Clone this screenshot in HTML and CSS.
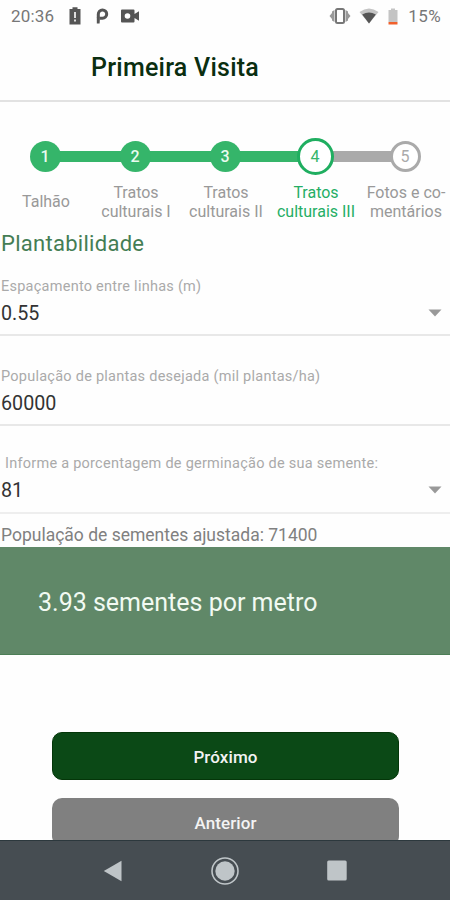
FILE: index.html
```html
<!DOCTYPE html>
<html lang="pt-BR">
<head>
<meta charset="utf-8">
<title>Primeira Visita</title>
<link rel="stylesheet" href="styles.css">
</head>
<body>
<div class="screen">
  <div class="status">
    <span class="clock">20:36</span>
    <svg class="st-alert" width="12" height="18" viewBox="0 0 12 18"><path fill="#555" d="M3.500 2V.3h5V2H11.500v15.500H.5V2z"/><path fill="#ddd" d="M5 5h2v6H5zM5 12.500h2v2H5z"/></svg>
    <svg class="st-p" width="13" height="16" viewBox="0 0 13 16"><path fill="none" stroke="#555" stroke-width="3" d="M2.300 9.500V6.200A4.200 4.200 0 1 1 6.500 10.300H3.500"/><path fill="#555" d="M.8 9h3v3L3.600 15.500H.8z"/></svg>
    <svg class="st-cam" width="20" height="14" viewBox="0 0 20 14"><path fill="#555" d="M2 .5h11.500q1 0 1 1V5L19 2.300v9.400L14.500 9v3.500q0 1-1 1H2q-1 0-1-1v-11q0-1 1-1z"/><circle cx="7.500" cy="7" r="2.800" fill="#fff"/></svg>
    <span class="grow"></span>
    <svg class="st-vib" width="22" height="16" viewBox="0 0 22 16"><path fill="#999" d="M5.500 2v12L3 12.500V11L.5 8 3 5V3.500zM16.500 2v12l2.500-1.500V11l2.500-3L19 5V3.500z"/><rect x="7" y="1" width="8" height="14" rx="1.500" fill="#fff" stroke="#777" stroke-width="2"/></svg>
    <svg class="st-wifi" width="20" height="16" viewBox="0 0 20 16"><path fill="#c4c4c4" d="M.5 4Q10-3 19.500 4L10 15.500z"/><path fill="#555" d="M3.200 6.500Q10 2.300 16.800 6.500L10 15.500z"/></svg>
    <svg class="st-bat" width="10" height="17" viewBox="0 0 10 17"><path fill="#c4c4c4" d="M3 2V.5h4V2h2.500v12H.5V2z"/><path fill="#f0602c" d="M.5 14h9v2.500h-9z"/></svg>
    <span class="percent">15%</span>
  </div>
  <header class="header"><h1>Primeira Visita</h1></header>

  <ol class="stepper">
    <li class="step done"><div class="track"><i class="bar none"></i><b class="dot">1</b><i class="bar"></i></div><div class="label"><span>Talhão</span></div></li>
    <li class="step done"><div class="track"><i class="bar"></i><b class="dot">2</b><i class="bar"></i></div><div class="label"><span>Tratos<br>culturais I</span></div></li>
    <li class="step done"><div class="track"><i class="bar"></i><b class="dot">3</b><i class="bar"></i></div><div class="label"><span>Tratos<br>culturais II</span></div></li>
    <li class="step current"><div class="track"><i class="bar"></i><b class="dot">4</b><i class="bar todo"></i></div><div class="label"><span>Tratos<br>culturais III</span></div></li>
    <li class="step next"><div class="track"><i class="bar todo"></i><b class="dot">5</b><i class="bar none"></i></div><div class="label"><span>Fotos e co-<br>mentários</span></div></li>
  </ol>

  <main class="form">
    <h2>Plantabilidade</h2>
    <div class="field spacing">
      <div class="caption">Espaçamento entre linhas (m)</div>
      <div class="value"><span>0.55</span><svg width="14" height="8" viewBox="0 0 14 8"><path fill="#999" d="M.5.500h13L7 7.500z"/></svg></div>
    </div>
    <div class="field population">
      <div class="caption">População de plantas desejada (mil plantas/ha)</div>
      <div class="value"><span>60000</span></div>
    </div>
    <div class="field germination">
      <div class="caption">Informe a porcentagem de germinação de sua semente:</div>
      <div class="value"><span>81</span><svg width="14" height="8" viewBox="0 0 14 8"><path fill="#999" d="M.5.500h13L7 7.500z"/></svg></div>
    </div>
    <p class="adjusted"><span>População de sementes ajustada: 71400</span></p>
    <div class="result"><span>3.93 sementes por metro</span></div>
    <div class="actions">
      <button class="btn primary">Próximo</button>
      <button class="btn secondary">Anterior</button>
    </div>
  </main>

  <nav class="navbar">
    <svg width="20" height="22" viewBox="0 0 20 22"><path fill="#bfc5c8" d="M18.500.7v20.500L.8 11z"/></svg>
    <svg width="30" height="30" viewBox="0 0 30 30"><circle cx="15" cy="15" r="13" fill="none" stroke="#bfc5c8" stroke-width="1.600"/><circle cx="15" cy="15" r="9.700" fill="#bfc5c8"/></svg>
    <svg width="20" height="21" viewBox="0 0 20 21"><rect x=".2" y=".5" width="19.500" height="20" rx="1.500" fill="#bfc5c8"/></svg>
  </nav>
</div>
</body>
</html>
```
FILE: styles.css
```css
* { box-sizing: border-box; }
body { margin: 0; background: #fff; font-family: Roboto, "Liberation Sans", sans-serif; }
.screen { width: 450px; height: 900px; display: flex; flex-direction: column; overflow: hidden; background: #fefefe; }
svg { display: block; flex: none; }
.grow { flex: 1; }

.status { height: 32px; flex: none; display: flex; align-items: center; padding: 0 9px 0 11px; color: #777; font-size: 17px; }
.clock { letter-spacing: .2px; }
.percent { letter-spacing: .4px; }
.st-alert { margin-left: 15px; }
.st-p { margin-left: 15px; }
.st-cam { margin-left: 11px; }
.st-wifi { margin-left: 8px; }
.st-bat { margin: 0 10px 0 9px; }

.header { height: 70px; flex: none; border-bottom: 2px solid #e2e2e2; padding: 20px 0 0 91px; }
h1 { margin: 0; font-size: 25px; line-height: 32px; font-weight: 500; letter-spacing: .25px; color: #0a2e10; }

.stepper { list-style: none; margin: 0; padding: 36px 0 0; display: flex; flex: none; height: 127px; }
.step { width: 90px; color: #999; }
.track { height: 37px; display: flex; align-items: center; }
.bar { flex: 1; height: 11px; background: #35b56a; }
.bar.todo { background: #aaa; }
.bar.none { background: none; }
.dot { position: relative; width: 31px; height: 31px; margin: 0 -2px; border-radius: 50%; flex: none; display: flex; align-items: center; justify-content: center; font-size: 16px; font-weight: 500; color: #e9fbef; background: #35b56a; }
.current .dot { width: 37px; height: 37px; border: 3px solid #1fae60; background: #fff; color: #35b56a; font-weight: 400; }
.next .dot { border: 3px solid #aaa; background: #fff; color: #aaa; font-weight: 400; }
.label { height: 37px; margin: 9px -1px 0 1px; display: flex; align-items: center; justify-content: center; text-align: center; font-size: 16px; line-height: 18.500px; white-space: nowrap; }
.current .label { color: #25ae65; }

.form { flex: 1; min-height: 0; overflow: hidden; display: flex; flex-direction: column; }
h2 { margin: 0; height: 28px; flex: none; padding: 1px 0 0 1px; font-size: 22px; line-height: 28px; font-weight: 400; letter-spacing: .28px; color: #447d54; }
.field { flex: none; display: flex; flex-direction: column; border-bottom: 2px solid #e8e8e8; }
.spacing { height: 79px; padding-top: 21px; }
.population { height: 90px; padding-top: 32px; }
.germination { height: 88px; padding-top: 29px; border-color: #eee; }
.caption { padding-left: 1px; font-size: 14.500px; line-height: 18px; letter-spacing: .25px; color: #aaa; white-space: nowrap; }
.germination .caption { padding-left: 5px; }
.value { display: flex; align-items: center; justify-content: space-between; height: 34px; padding: 0 8px 0 1px; font-size: 19.700px; color: #333; }
.adjusted { margin: 0; height: 33px; flex: none; padding: 9px 0 0 1px; font-size: 17.500px; line-height: 24px; color: #808080; white-space: nowrap; }
.result { height: 108px; flex: none; display: flex; align-items: center; padding: 3px 0 0 38px; font-size: 25px; color: #f2faf2; background: #608868; border-bottom: 1px solid #4c7e56; }
.actions { padding: 76.500px 51px 0 52px; display: flex; flex-direction: column; gap: 18px; }
.btn { height: 48px; flex: none; border: 0; border-radius: 10px; font: 500 17px Roboto, "Liberation Sans", sans-serif; letter-spacing: .1px; color: #f3f3f3; padding: 2px 0 0; }
.primary { background: #0b4916; border: 1px solid #043609; }
.secondary { background: #808080; }

.navbar { height: 60px; flex: none; display: flex; align-items: center; justify-content: space-between; padding: 0 103px 0 103px; background: #464d52; border-top: 1px solid #2c383d; }
```
